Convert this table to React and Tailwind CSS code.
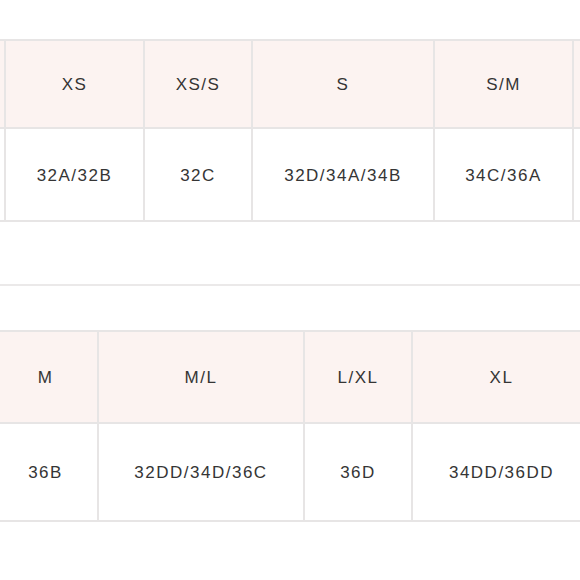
const font = { fontFamily: '"Liberation Sans", Arial, sans-serif' }

function Cell({ w, children, last }) {
  return (
    <div
      className={`flex shrink-0 items-center justify-center pt-[2px] ${last ? '' : 'border-r-2'} border-[#e7e5e5]`}
      style={{ width: w }}
    >
      <span className="text-[17px] tracking-[1.5px] text-[#353535]">{children}</span>
    </div>
  )
}

function SizeTable({ offset, widths, head, body, headH, bodyH }) {
  return (
    <div className="flex flex-col" style={{ marginLeft: offset }}>
      <div className={`flex ${headH} border-y-2 border-[#e7e5e5] bg-[#fcf3f1] w-max`}>
        {head.map((t, i) => (
          <Cell key={i} w={widths[i]} last={i === head.length - 1}>{t}</Cell>
        ))}
      </div>
      <div className={`flex ${bodyH} border-b-2 border-[#e7e5e5] bg-white w-max`}>
        {body.map((t, i) => (
          <Cell key={i} w={widths[i]} last={i === body.length - 1}>{t}</Cell>
        ))}
      </div>
    </div>
  )
}

export default function App() {
  return (
    <div className="w-[580px] h-[580px] overflow-hidden bg-white" style={font}>
      <div className="pt-[39px]">
        <SizeTable
          offset={-95}
          widths={[101, 139, 108, 182, 139, 120]}
          head={['', 'XS', 'XS/S', 'S', 'S/M', '']}
          body={['', '32A/32B', '32C', '32D/34A/34B', '34C/36A', '']}
          headH="h-[90px]"
          bodyH="h-[93px]"
        />
      </div>

      <div className="mt-[62px] h-[2px] w-full bg-[#ebe9e9]" />

      <div className="mt-[44px]">
        <SizeTable
          offset={-6}
          widths={[105, 206, 108, 177]}
          head={['M', 'M/L', 'L/XL', 'XL']}
          body={['36B', '32DD/34D/36C', '36D', '34DD/36DD']}
          headH="h-[94px]"
          bodyH="h-[98px]"
        />
      </div>
    </div>
  )
}
